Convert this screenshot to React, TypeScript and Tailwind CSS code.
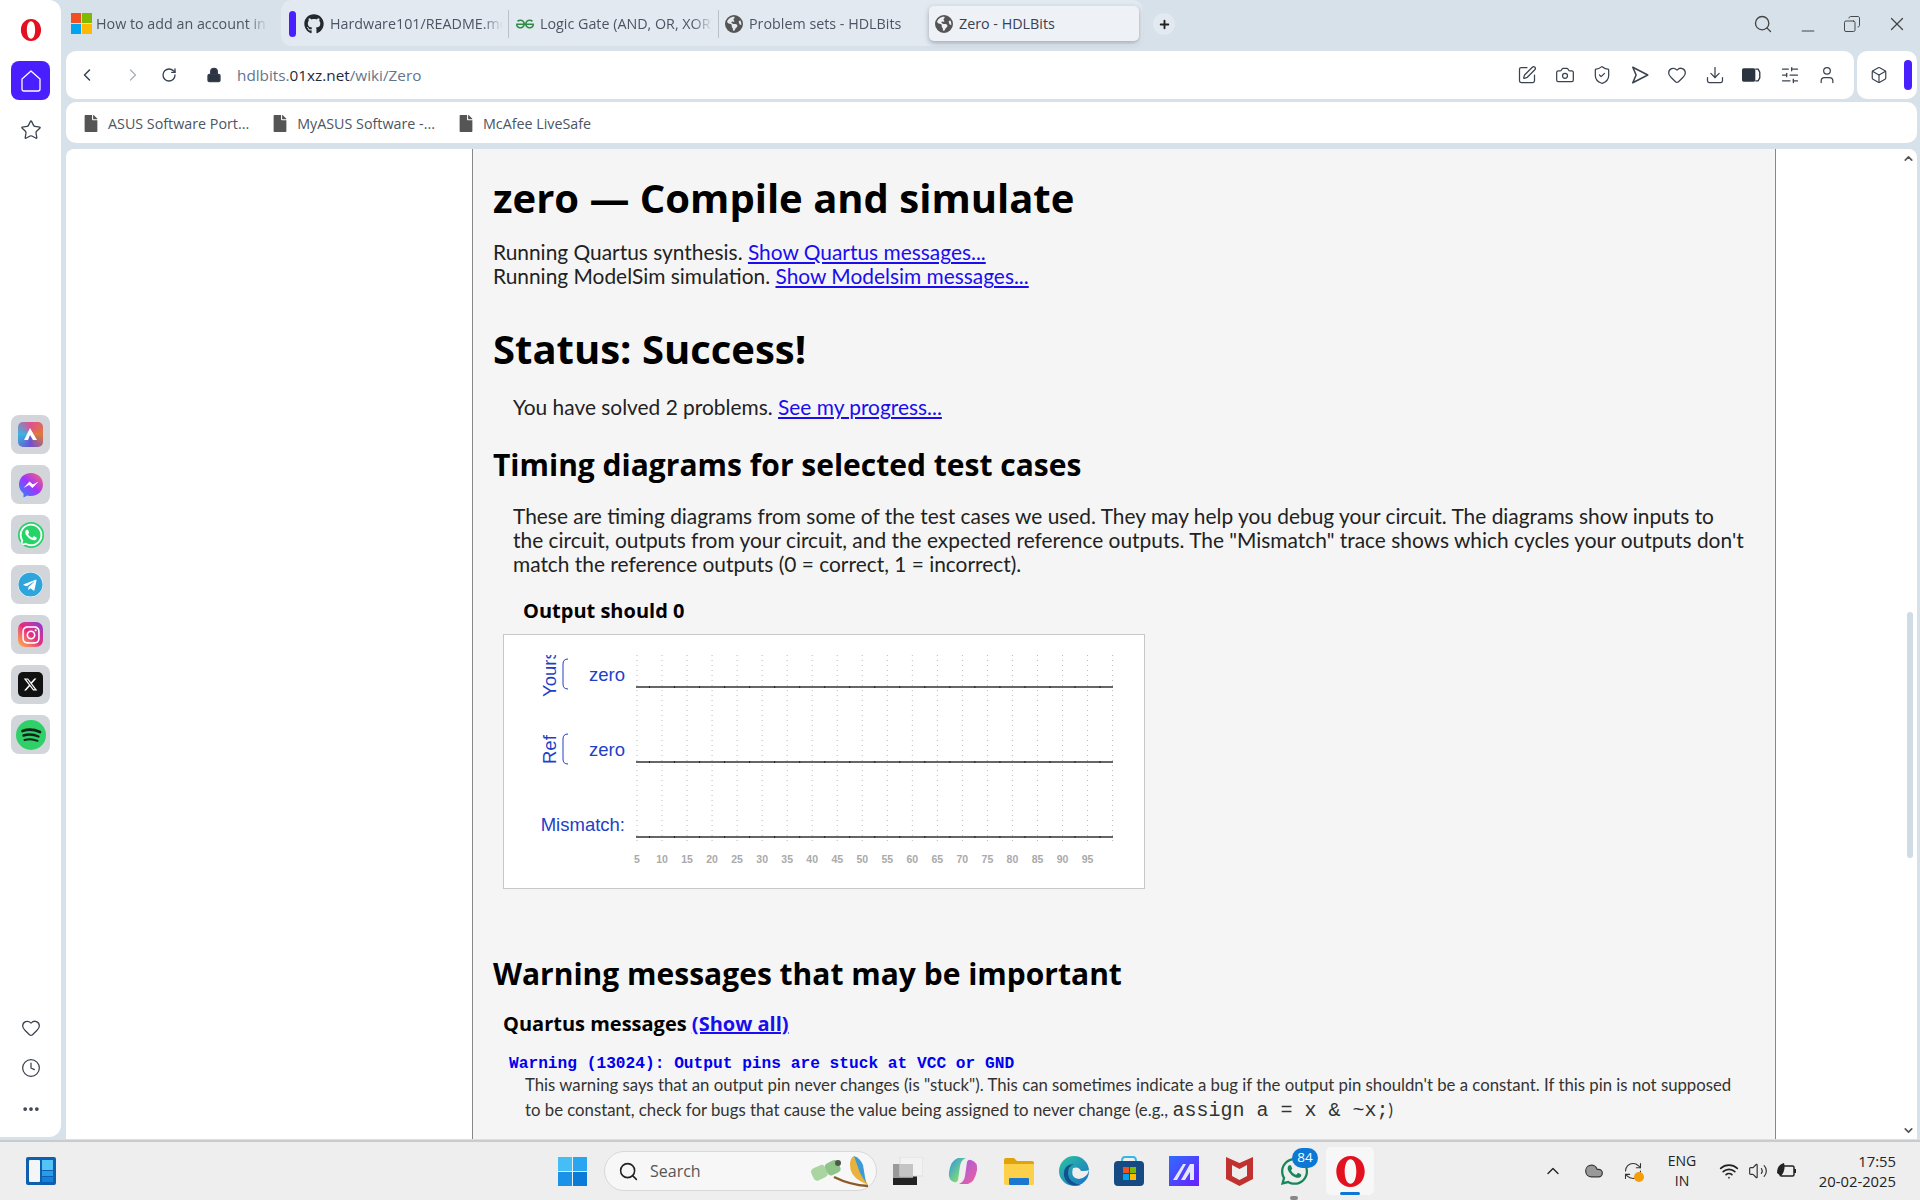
import { Box, Camera, ChevronLeft, ChevronRight, ChevronUp, ChevronDown, Clock, Copy, Download, Heart, Lock, Minus, MoreHorizontal, Plus, RotateCw, Search, ShieldCheck, SlidersHorizontal, SquarePen, Star, User, Volume2, Wifi, X, Cloud, RefreshCw } from "lucide-react";
import { FaGithub, FaFile, FaWhatsapp, FaTelegram, FaInstagram } from "react-icons/fa";
import { FaEarthAmericas, FaXTwitter } from "react-icons/fa6";
import { SiGeeksforgeeks } from "react-icons/si";

const OperaLogo = ({ size = 24 }: { size?: number }) => (
  <svg width={size} height={size} viewBox="0 0 24 24">
    <path
      fillRule="evenodd"
      fill="#e3101f"
      d="M12 0 C18.5 0 23 5.4 23 12 C23 18.6 18.5 24 12 24 C5.5 24 1 18.6 1 12 C1 5.4 5.5 0 12 0 Z M12 2.5 C9.2 2.5 7.5 6.8 7.5 12 C7.5 17.2 9.2 21.5 12 21.5 C14.8 21.5 16.5 17.2 16.5 12 C16.5 6.8 14.8 2.5 12 2.5 Z"
    />
  </svg>
);

const Globe = () => <FaEarthAmericas className="h-[18px] w-[18px] shrink-0 text-[#555]" />;

const TabText = ({ children, w }: { children: string; w: string }) => (
  <span className={`${w} ml-[6px] overflow-hidden whitespace-nowrap text-[14.3px] text-[#4b5563] [mask-image:linear-gradient(90deg,#000_88%,transparent)]`}>
    {children}
  </span>
);

const TabBar = () => (
  <div className="flex h-[51px] items-start">
    <div className="flex h-[46px] w-[215px] items-center pl-[5px] pt-[1px]">
      <svg width="21" height="21" viewBox="0 0 21 21" className="-mr-[2px] shrink-0">
        <rect width="10" height="10" fill="#f25022" />
        <rect x="11" width="10" height="10" fill="#7fba00" />
        <rect y="11" width="10" height="10" fill="#00a4ef" />
        <rect x="11" y="11" width="10" height="10" fill="#ffb900" />
      </svg>
      <TabText w="w-[172px]">How to add an account in</TabText>
    </div>
    <div className="flex h-[46px] w-[862px] items-center rounded-[10px] bg-[#e2e9f0] pl-[8px] pt-[1px]">
      <div className="h-[26px] w-[7px] rounded-full bg-[#4a1fff]" />
      <FaGithub className="ml-[8px] h-[20px] w-[20px] shrink-0 text-[#24292f]" />
      <TabText w="w-[173px]">Hardware101/README.md</TabText>
      <div className="ml-[5px] h-[28px] w-px bg-[#b8c2cc]" />
      <SiGeeksforgeeks className="ml-[7px] h-[18px] w-[18px] shrink-0 text-[#2f8d46]" />
      <TabText w="w-[173px]">Logic Gate (AND, OR, XOR)</TabText>
      <div className="ml-[5px] h-[28px] w-px bg-[#b8c2cc]" />
      <div className="ml-[6px]"><Globe /></div>
      <TabText w="w-[172px]">Problem sets - HDLBits</TabText>
      <div className="ml-[8px] flex h-[35px] w-[210px] items-center rounded-[5px] bg-[#eef2f7] pl-[6px] shadow-[0_2px_5px_rgba(60,70,90,0.4)]">
        <Globe />
        <span className="ml-[6px] text-[14.3px] text-[#374151]">Zero - HDLBits</span>
      </div>
    </div>
    <div className="ml-[10px] mt-[13px] flex h-[22px] w-[22px] items-center justify-center rounded-full bg-[#e2e9f0]">
      <Plus className="h-[13px] w-[13px] text-[#222]" strokeWidth={3.5} />
    </div>
    <div className="ml-auto mr-[12px] mt-[13px] flex items-center gap-[25px] text-[#444]">
      <Search className="h-[20px] w-[20px]" strokeWidth={1.6} />
      <Minus className="h-[20px] w-[20px] translate-y-[7px]" strokeWidth={1.2} />
      <Copy className="h-[18px] w-[18px] -scale-x-100" strokeWidth={1.3} />
      <X className="h-[22px] w-[22px]" strokeWidth={1.3} />
    </div>
  </div>
);

const AddressBar = () => (
  <div className="flex h-[48px] gap-[3px]">
    <div className="flex w-[1788px] items-center rounded-[10px] bg-white pl-[11px] pr-[17px] text-[#374151]">
      <ChevronLeft className="h-[20px] w-[20px]" strokeWidth={1.8} />
      <ChevronRight className="ml-[26px] h-[20px] w-[20px] text-[#a9b0b8]" strokeWidth={1.5} />
      <RotateCw className="ml-[18px] h-[16px] w-[16px]" strokeWidth={2} />
      <Lock className="ml-[29px] h-[16px] w-[16px] fill-[#2b3440]" strokeWidth={2} />
      <span className="ml-[15px] text-[15.3px] text-[#64748b]">
        hdlbits.<span className="text-[#1f2937]">01xz.net</span>/wiki/Zero
      </span>
      <div className="ml-auto flex items-center gap-[17.5px] text-[#3a4350]">
        <SquarePen className="h-[20px] w-[20px]" strokeWidth={1.5} />
        <Camera className="h-[20px] w-[20px]" strokeWidth={1.5} />
        <ShieldCheck className="h-[20px] w-[20px]" strokeWidth={1.5} />
        <svg width="20" height="20" viewBox="0 0 18 18" fill="none" stroke="currentColor" strokeWidth="1.4" strokeLinejoin="round">
          <path d="M2.5 2 L16 9 L2.5 16 L5.5 9 Z" />
        </svg>
        <Heart className="h-[20px] w-[20px]" strokeWidth={1.5} />
        <Download className="h-[20px] w-[20px]" strokeWidth={1.5} />
        <svg width="20" height="20" viewBox="0 0 18 18">
          <rect x="0" y="3" width="12" height="12" rx="1.5" fill="#2b3440" />
          <path d="M12 3.7 H14.5 L16 6.5 V11.5 L14.5 14.3 H12" fill="none" stroke="#2b3440" strokeWidth="1.2" />
        </svg>
        <SlidersHorizontal className="h-[20px] w-[20px]" strokeWidth={1.5} />
        <User className="h-[20px] w-[20px]" strokeWidth={1.5} />
      </div>
    </div>
    <div className="flex w-[60px] items-center rounded-[10px] bg-white pl-[13px]">
      <Box className="h-[18px] w-[18px] text-[#3a4350]" strokeWidth={1.6} />
      <div className="ml-[16px] h-[30px] w-[8px] rounded-full bg-[#4a1fff]" />
    </div>
  </div>
);

const Bookmark = ({ label }: { label: string }) => (
  <div className="flex items-center">
    <FaFile className="h-[17px] w-[14px] text-[#555]" />
    <span className="ml-[10px] text-[14.3px] text-[#4b5563]">{label}</span>
  </div>
);

const Bookmarks = () => (
  <div className="mt-[3px] flex h-[41px] w-[1851px] items-center gap-[24px] rounded-[10px] bg-white pl-[18px] pt-[2px]">
    <Bookmark label="ASUS Software Port..." />
    <Bookmark label="MyASUS Software -..." />
    <Bookmark label="McAfee LiveSafe" />
  </div>
);

const ticks = [5, 10, 15, 20, 25, 30, 35, 40, 45, 50, 55, 60, 65, 70, 75, 80, 85, 90, 95];
const grid = Array.from({ length: 20 }, (_, i) => 133 + i * 25.03);

const Trace = ({ y }: { y: number }) => (
  <g>
    <line x1="132" x2="609" y1={y} y2={y} stroke="#333" strokeWidth="1.4" />
    {grid.slice(0, 19).map((x) => (
      <line key={x} x1={x + 12.5} x2={x + 12.5} y1={y - 1} y2={y + 1} stroke="#222" strokeWidth="1" />
    ))}
  </g>
);

const Brace = ({ y }: { y: number }) => (
  <path d={`M64 ${y} Q59 ${y} 59 ${y + 5} V${y + 25} Q59 ${y + 30} 64 ${y + 30}`} fill="none" stroke="#1e40c8" strokeWidth="1" />
);

const TimingDiagram = () => (
  <div className="ml-[10px] mt-[10px] h-[255px] w-[642px] border border-[#c8c8c8] bg-white">
    <svg width="640" height="253" viewBox="0 0 640 253" fontFamily="'Liberation Sans',sans-serif">
      {grid.map((x) => (
        <line key={x} x1={x} x2={x} y1="20" y2="208" stroke="#bbb" strokeWidth="1" strokeDasharray="1 4" />
      ))}
      <Trace y={52} />
      <Trace y={127} />
      <Trace y={202} />
      <svg x="30" y="20" width="30" height="50">
        <text transform="translate(22 42) rotate(-90)" fontSize="18.5" fill="#1e40c8">Yours</text>
      </svg>
      <text transform="translate(52 129) rotate(-90)" fontSize="18.5" fill="#1e40c8">Ref</text>
      <Brace y={24} />
      <Brace y={99} />
      <text x="121" y="46" textAnchor="end" fontSize="18.5" fill="#1e40c8">zero</text>
      <text x="121" y="121" textAnchor="end" fontSize="18.5" fill="#1e40c8">zero</text>
      <text x="121" y="196" textAnchor="end" fontSize="18.5" fill="#1e40c8">Mismatch:</text>
      {ticks.map((t, i) => (
        <text key={t} x={grid[i]} y="228" textAnchor="middle" fontSize="10.5" fontWeight="700" fill="#aaa">{t}</text>
      ))}
    </svg>
  </div>
);

const WikiPage = () => (
  <div className="flex h-[990px] w-[1851px] overflow-hidden rounded-t-[8px] bg-white">
    <div className="w-[406px] shrink-0" />
    <main className="h-full w-[1304px] shrink-0 overflow-hidden border-x border-[#888] bg-[#f5f5f5] pl-[20px] pr-[27px] font-['Lato',sans-serif] text-[20.9px] leading-[24px] text-[#222]">
      <h1 className="mt-[22px] font-['Open_Sans',sans-serif] text-[40px] font-bold leading-[54px] text-black">zero — Compile and simulate</h1>
      <p className="mt-[15px]">
        Running Quartus synthesis. <a className="text-[#1a0dee] underline">Show Quartus messages...</a>
        <br />
        Running ModelSim simulation. <a className="text-[#1a0dee] underline">Show Modelsim messages...</a>
      </p>
      <h1 className="mt-[34px] font-['Open_Sans',sans-serif] text-[40px] font-bold leading-[54px] text-black">Status: Success!</h1>
      <p className="ml-[20px] mt-[19px]">
        You have solved 2 problems. <a className="text-[#1a0dee] underline">See my progress...</a>
      </p>
      <h2 className="mt-[28px] font-['Open_Sans',sans-serif] text-[30px] font-bold leading-[36px] text-black">Timing diagrams for selected test cases</h2>
      <p className="ml-[20px] mt-[21px]">
        These are timing diagrams from some of the test cases we used. They may help you debug your circuit. The diagrams show inputs to the circuit, outputs from your circuit, and the expected reference outputs. The "Mismatch" trace shows which cycles your outputs don't match the reference outputs (0 = correct, 1 = incorrect).
      </p>
      <h3 className="ml-[30px] mt-[21px] font-['Open_Sans',sans-serif] text-[20px] font-bold leading-[27px] text-black">Output should 0</h3>
      <TimingDiagram />
      <h2 className="mt-[65px] font-['Open_Sans',sans-serif] text-[30px] font-bold leading-[40px] text-black">Warning messages that may be important</h2>
      <h3 className="ml-[10px] mt-[16px] font-['Open_Sans',sans-serif] text-[20px] font-bold leading-[27px] text-black">
        Quartus messages <a className="text-[#1a0dee] underline">(Show all)</a>
      </h3>
      <div className="ml-[16px] mt-[20px] font-['Liberation_Mono',monospace] text-[16.2px] font-bold leading-[15px] text-[#0000ee]">Warning (13024): Output pins are stuck at VCC or GND</div>
      <p className="ml-[32px] text-[16.75px] leading-[25px] text-[#333]">
        This warning says that an output pin never changes (is "stuck"). This can sometimes indicate a bug if the output pin shouldn't be a constant. If this pin is not supposed to be constant, check for bugs that cause the value being assigned to never change (e.g., <span className="font-['Liberation_Mono',monospace] text-[20px] leading-none">assign a = x &amp; ~x;</span>)
      </p>
    </main>
    <div className="relative flex-1">
      <ChevronUp className="absolute right-[2px] top-[3px] h-[13px] w-[13px] text-[#555]" strokeWidth={3} />
      <div className="absolute right-[4px] top-[463px] h-[246px] w-[6px] rounded-full bg-[#cfdbe5]" />
      <ChevronDown className="absolute bottom-[2px] right-[2px] h-[13px] w-[13px] text-[#555]" strokeWidth={3} />
    </div>
  </div>
);

const AppTile = ({ children }: { children: React.ReactNode }) => (
  <div className="flex h-[39px] w-[39px] items-center justify-center rounded-[8px] bg-[#d2d6da]">
    {children}
  </div>
);

const Sidebar = () => (
  <aside className="flex h-[1137px] w-[61px] shrink-0 flex-col items-center rounded-br-[12px] rounded-tr-[12px] bg-white pt-[19px] text-[#3a4350]">
    <OperaLogo size={22} />
    <div className="mt-[20px] flex h-[39px] w-[39px] items-center justify-center rounded-[8px] bg-[#4a1fff]">
      <svg width="20" height="22" viewBox="0 0 20 22" fill="none" stroke="white" strokeWidth="1.3" strokeLinejoin="round">
        <path d="M1 9 L10 1 L19 9 V19 Q19 21 17 21 H3 Q1 21 1 19 Z" />
      </svg>
    </div>
    <Star className="mt-[19px] h-[22px] w-[22px]" strokeWidth={1.4} />
    <div className="mt-[274px] flex flex-col gap-[11px]">
      <AppTile>
        <div className="flex h-[25px] w-[25px] items-center justify-center rounded-[5px] bg-[conic-gradient(from_180deg,#6d4fd0,#3ab5e0,#e0508f,#e07a3a,#6d4fd0)]">
          <svg width="15" height="15" viewBox="0 0 15 15"><path d="M7 1 L14 13 H10 L7 8 L5 13 H1 Z" fill="white" /></svg>
        </div>
      </AppTile>
      <AppTile>
        <svg width="26" height="26" viewBox="0 0 26 26">
          <defs>
            <linearGradient id="msg" x1="0" y1="1" x2="1" y2="0">
              <stop offset="0" stopColor="#1e90ff" />
              <stop offset="0.5" stopColor="#a033ff" />
              <stop offset="1" stopColor="#ff6a68" />
            </linearGradient>
          </defs>
          <path d="M13 1 C20 1 25 6 25 12.5 C25 19 20 24 13 24 Q11 24 9.5 23.5 L5.5 25.5 V21.5 C2.5 19 1 16 1 12.5 C1 6 6 1 13 1 Z" fill="url(#msg)" />
          <path d="M5.5 16 L11.5 9.5 L15 12.5 L20.5 9.5 L14.5 16 L11 13 Z" fill="white" />
        </svg>
      </AppTile>
      <AppTile><FaWhatsapp className="h-[26px] w-[26px] rounded-full bg-[#25d366] text-white" /></AppTile>
      <AppTile><FaTelegram className="h-[25px] w-[25px] rounded-full bg-white text-[#2fa5dc]" /></AppTile>
      <AppTile>
        <div className="flex h-[25px] w-[25px] items-center justify-center rounded-[7px] bg-linear-to-tr from-[#fdb32b] via-[#e6287f] to-[#8a2fd0]">
          <FaInstagram className="h-[20px] w-[20px] text-white" />
        </div>
      </AppTile>
      <AppTile>
        <div className="flex h-[25px] w-[25px] items-center justify-center rounded-[5px] bg-[#111]">
          <FaXTwitter className="h-[15px] w-[15px] text-white" />
        </div>
      </AppTile>
      <AppTile>
        <svg width="30" height="30" viewBox="0 0 30 30">
          <circle cx="15" cy="15" r="15" fill="#2ed068" />
          <g fill="none" stroke="#14231a" strokeLinecap="round">
            <path d="M6.5 11 Q15 8 24 12" strokeWidth="2.8" />
            <path d="M7.5 15.5 Q15 13 22.5 16.5" strokeWidth="2.4" />
            <path d="M8.5 20 Q15 18 21.5 20.8" strokeWidth="2" />
          </g>
        </svg>
      </AppTile>
    </div>
    <Heart className="mt-[264px] h-[20px] w-[20px]" strokeWidth={1.5} />
    <Clock className="mt-[20px] h-[20px] w-[20px]" strokeWidth={1.5} />
    <MoreHorizontal className="mt-[21px] h-[20px] w-[20px]" strokeWidth={2.5} />
  </aside>
);

const Taskbar = () => (
  <footer className="flex h-[60px] items-center border-t-2 border-[#c8cccf] bg-[#eeeeee] font-['Open_Sans',sans-serif]">
    <svg width="30" height="28" viewBox="0 0 30 28" className="ml-[26px] shrink-0">
      <rect width="30" height="28" rx="2" fill="#0f5fae" />
      <rect x="3" y="3" width="11" height="22" rx="1" fill="#f3f5f7" />
      <rect x="16" y="3" width="11" height="10" fill="#53c4f7" />
      <rect x="16" y="14" width="11" height="5" fill="#2a9be8" />
      <rect x="16" y="20" width="11" height="5" fill="#0f84de" />
    </svg>
    <svg width="29" height="29" viewBox="0 0 29 29" className="ml-[502px] shrink-0">
      <rect width="14" height="14" fill="#45bdf5" />
      <rect x="15" width="14" height="14" fill="#2aa5ef" />
      <rect y="15" width="14" height="14" fill="#1a92e8" />
      <rect x="15" y="15" width="14" height="14" fill="#0a7cd8" />
    </svg>
    <div className="ml-[17px] flex h-[40px] w-[273px] items-center rounded-full border border-[#d8d8d8] bg-[#f7f7f7] pl-[13px]">
      <Search className="h-[21px] w-[21px] text-[#222]" strokeWidth={1.8} />
      <span className="ml-[11px] text-[16px] text-[#555]">Search</span>
      <svg width="62" height="36" viewBox="0 0 62 36" className="ml-auto mr-[4px]">
        <rect x="2" y="13" width="15" height="13" rx="4" fill="#a9d6a0" transform="rotate(-25 10 20)" />
        <rect x="15" y="8" width="14" height="13" rx="4" fill="#8fc48a" transform="rotate(-25 23 13)" />
        <circle cx="28" cy="10" r="3" fill="#4a5a48" />
        <path d="M24 24 Q40 32 58 33" stroke="#8b5a2b" strokeWidth="2.5" fill="none" />
        <path d="M44 3 Q52 8 55 26 L58 32 L50 28 Q40 22 40 12 Q40 5 44 3 Z" fill="#e8b23c" />
        <path d="M44 3 Q50 5 53 12 L56 30 L50 20 Z" fill="#3a9bd8" />
      </svg>
    </div>
    <svg width="30" height="28" viewBox="0 0 30 28" className="ml-[16px] shrink-0">
      <rect x="0" y="7" width="24" height="21" fill="#222" />
      <rect x="0" y="7" width="20" height="14" fill="#9a9a9a" />
      <rect x="7" y="0" width="23" height="19" fill="#f2f2f2" stroke="#ddd" strokeWidth="1" />
      <rect x="7" y="7" width="13" height="12" fill="#c4c4c4" />
    </svg>
    <svg width="30" height="30" viewBox="0 0 30 30" className="ml-[25px] shrink-0">
      <defs>
        <linearGradient id="cop" x1="0" y1="0" x2="1" y2="1">
          <stop offset="0" stopColor="#2e8fe8" />
          <stop offset="0.6" stopColor="#6fd08a" />
          <stop offset="1" stopColor="#f0c83a" />
        </linearGradient>
        <linearGradient id="cop2" x1="0" y1="0" x2="1" y2="1">
          <stop offset="0" stopColor="#a05ae8" />
          <stop offset="1" stopColor="#f0609a" />
        </linearGradient>
      </defs>
      <path d="M10 2 H18 Q13 4 12 10 L10 24 Q9 27 6 26 Q0 24 1 16 Q3 4 10 2 Z" fill="url(#cop)" />
      <path d="M20 28 H11 Q16 26 17 20 L19 6 Q20 3 23 4 Q30 6 29 14 Q27 26 20 28 Z" fill="url(#cop2)" />
    </svg>
    <svg width="30" height="27" viewBox="0 0 30 27" className="ml-[26px] shrink-0">
      <path d="M0 2 Q0 0 2 0 H10 L13 3 H28 Q30 3 30 5 V10 H0 Z" fill="#e0a30a" />
      <path d="M0 6 H30 V25 Q30 27 28 27 H2 Q0 27 0 25 Z" fill="#fdd04a" />
      <rect x="5" y="20" width="20" height="7" rx="1" fill="#1a78d0" />
    </svg>
    <svg width="30" height="30" viewBox="0 0 30 30" className="ml-[25px] shrink-0">
      <defs>
        <linearGradient id="edg" x1="0" y1="0" x2="1" y2="1">
          <stop offset="0" stopColor="#2bc4a0" />
          <stop offset="1" stopColor="#1a6fc8" />
        </linearGradient>
      </defs>
      <circle cx="15" cy="15" r="15" fill="url(#edg)" />
      <path d="M14 12 Q20 10 22 15 Q28 15 30 14 Q28 22 20 23 Q11 22 14 12 Z" fill="#eeeeee" />
      <path d="M5 20 Q4 8 15 8 Q9 10 9 18 Q10 27 22 29 Q8 32 5 20 Z" fill="#14508f" />
    </svg>
    <svg width="30" height="30" viewBox="0 0 30 30" className="ml-[25px] shrink-0">
      <path d="M8 5 Q8 1 11 1 H19 Q22 1 22 5" fill="none" stroke="#35b8e8" strokeWidth="2" />
      <rect y="5" width="30" height="25" rx="4" fill="#154a82" />
      <rect x="9" y="11" width="6" height="6" fill="#f25022" />
      <rect x="16" y="11" width="6" height="6" fill="#7fba00" />
      <rect x="9" y="18" width="6" height="6" fill="#00a4ef" />
      <rect x="16" y="18" width="6" height="6" fill="#ffb900" />
    </svg>
    <svg width="30" height="30" viewBox="0 0 30 30" className="ml-[25px] shrink-0">
      <defs>
        <linearGradient id="ma" x1="0" y1="0" x2="1" y2="1">
          <stop offset="0" stopColor="#2f6cff" />
          <stop offset="1" stopColor="#6a1fff" />
        </linearGradient>
      </defs>
      <rect width="30" height="30" fill="url(#ma)" />
      <path d="M4 24 L14 8 H17 L8 24 Z M12 24 L21 8 H25 L25 24 H21 L21 16 L16 24 Z" fill="#e4e6ff" />
    </svg>
    <svg width="27" height="30" viewBox="0 0 27 30" className="ml-[27px] shrink-0">
      <path d="M0 1 L13.5 7 L27 1 V23 L13.5 30 L0 23 Z M6 9 V20 L13.5 24 L21 20 V9 L13.5 13 Z" fill="#c0312f" fillRule="evenodd" />
    </svg>
    <div className="relative ml-[26px] shrink-0">
      <FaWhatsapp className="h-[31px] w-[31px] text-[#17875a]" />
      <span className="absolute -right-[8px] -top-[8px] flex h-[20px] w-[26px] items-center justify-center rounded-full bg-[#0d78d4] text-[13.5px] text-white">84</span>
      <div className="absolute -bottom-[13px] left-[11px] h-[4px] w-[8px] rounded-full bg-[#888]" />
    </div>
    <div className="relative ml-[16px] flex h-[48px] w-[48px] shrink-0 items-center justify-center rounded-[5px] bg-[#f7f7f7]">
      <OperaLogo size={31} />
      <div className="absolute bottom-0 left-[14px] h-[3px] w-[20px] rounded-full bg-[#0d78d4]" />
    </div>
    <ChevronUp className="ml-[169px] h-[20px] w-[20px] shrink-0 text-[#222]" strokeWidth={1.6} />
    <Cloud className="ml-[21px] h-[20px] w-[20px] shrink-0 fill-[#999] text-[#333]" strokeWidth={1.4} />
    <div className="relative ml-[19px] shrink-0">
      <RefreshCw className="h-[20px] w-[20px] text-[#333]" strokeWidth={1.3} />
      <span className="absolute -bottom-[1px] -right-[1px] h-[10px] w-[10px] rounded-full bg-[#f59e0b]" />
    </div>
    <div className="ml-[21px] w-[36px] text-center text-[14px] leading-[20px] text-[#222]">ENG<br />IN</div>
    <Wifi className="ml-[19px] h-[20px] w-[20px] shrink-0 text-[#222]" strokeWidth={2} />
    <Volume2 className="ml-[9px] h-[20px] w-[20px] shrink-0 text-[#333]" strokeWidth={1.4} />
    <svg width="21" height="18" viewBox="0 0 21 18" className="ml-[8px] shrink-0">
      <rect x="4" y="4" width="14" height="10" rx="1.5" fill="none" stroke="#222" strokeWidth="1.5" />
      <rect x="18" y="7" width="2" height="4" fill="#222" />
      <path d="M1 11 Q1 3 8 1 Q10 8 5 14 Z" fill="#222" />
    </svg>
    <div className="ml-auto mr-[24px] text-right text-[14.8px] leading-[20px] text-[#222]">17:55<br />20-02-2025</div>
  </footer>
);

export default function App() {
  return (
    <div className="flex h-[1200px] w-[1920px] flex-col overflow-hidden bg-[#d7e1ea]">
      <div className="flex h-[1138px] flex-1">
        <Sidebar />
        <div className="ml-[5px] flex-1 font-['Open_Sans',sans-serif]">
          <TabBar />
          <AddressBar />
          <Bookmarks />
          <div className="mt-[6px]">
            <WikiPage />
          </div>
        </div>
      </div>
      <Taskbar />
    </div>
  );
}
